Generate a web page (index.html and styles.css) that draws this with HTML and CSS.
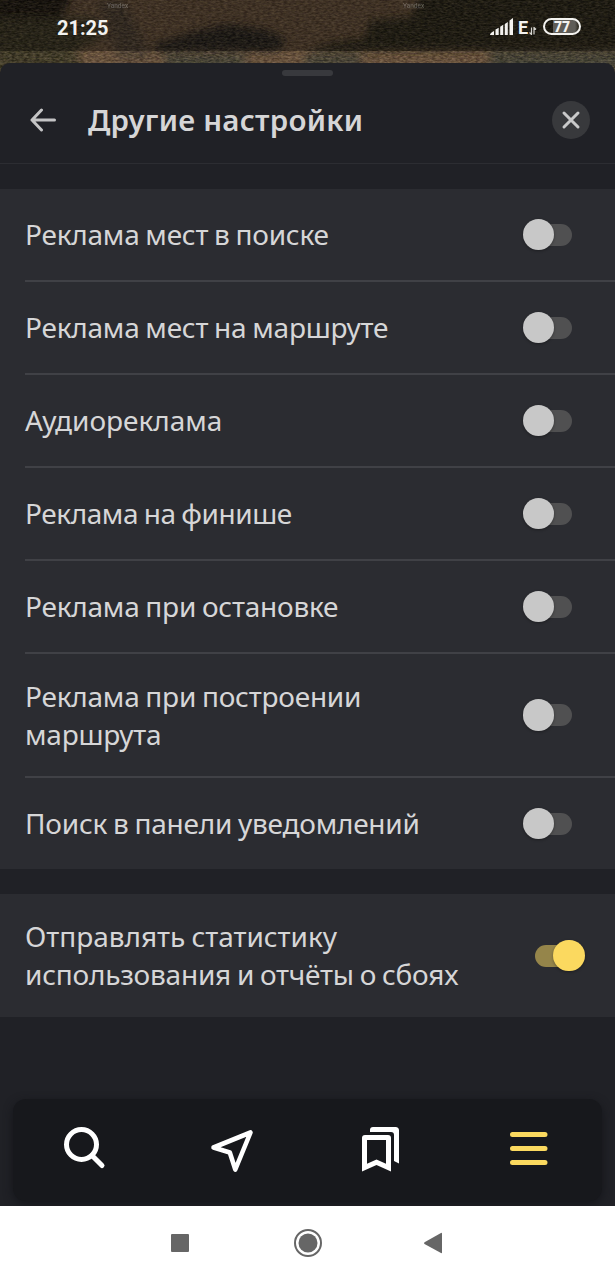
FILE: index.html
```html
<!DOCTYPE html>
<html lang="ru">
<head>
<meta charset="utf-8">
<title>Другие настройки</title>
<link rel="stylesheet" href="styles.css">
</head>
<body>
<div class="screen">
  <svg class="map" width="615" height="90" viewBox="0 0 615 90" aria-hidden="true">
    <defs>
      <filter id="soft" x="-20%" y="-50%" width="140%" height="200%"><feGaussianBlur stdDeviation="4"/></filter>
      <filter id="grain" x="0" y="0" width="100%" height="100%" color-interpolation-filters="sRGB">
        <feTurbulence type="fractalNoise" baseFrequency="0.25 0.6" numOctaves="3" seed="8"/>
        <feColorMatrix values="1 0 0 0 -0.22  0.9 0.1 0 0 -0.25  0.7 0 0.2 0 -0.24  0 0 0 0 0.34"/>
      </filter>
    </defs>
    <rect width="615" height="90" fill="#75593f"/>
    <g filter="url(#soft)">
      <path d="M-10-10H75L62 18H-10z" fill="#1b170f"/>
      <path d="M-10 18H95L105 36 75 51 90 85H-10z" fill="#3d3824"/>
      <path d="M98 0h25l30 60h-35z" fill="#544536"/>
      <path d="M152 45l45-14 30-7 40 6 20 10-10 12-70-1-50 2z" fill="#25241a"/>
      <path d="M420-10H630V50H470L305 52 330 43 365 38 370 20 412 17z" fill="#292519"/>
      <path d="M165 55h80v15h-80zM305 55h55v12h-55zM490 52h130v20H490z" fill="#434335"/>
    </g>
    <rect width="615" height="90" filter="url(#grain)"/>
    <rect width="615" height="51" fill="#000" opacity=".38"/>
    <text class="mark" x="107" y="8">Yandex</text>
    <text class="mark" x="403" y="8">Yandex</text>
  </svg>
  <header class="status">
    <span class="clock">21:25</span>
    <div class="indicators">
      <svg width="23" height="17" viewBox="0 0 23 17"><path d="M0 17q0-2 4-4v4zM5.500 11.500l3.200-1.700V17H5.500zM10.200 8.800l3-2V17h-3zM14.800 6l3-2v13h-3zM19.500 2.500L23 0v17h-3.500z"/></svg>
      <span class="net">E</span>
      <svg class="arrows" width="8" height="8" viewBox="0 0 8 8"><path d="M2.500.5v7L.5 5.500M5 7.500v-7l2 2"/></svg>
      <span class="battery"><b>77</b></span>
    </div>
  </header>
  <main class="sheet">
    <div class="grip"></div>
    <div class="head">
      <svg class="back" width="28" height="24" viewBox="0 0 28 24"><path d="M12.500 2L3 12l9.500 10M3 12h22.500"/></svg>
      <h1 class="title">Другие настройки</h1>
      <button class="close" aria-label="Закрыть"><svg width="20" height="20" viewBox="0 0 20 20"><path d="M3 3l14 14M17 3L3 17"/></svg></button>
    </div>
    <section class="group">
      <div class="row"><span class="label">Реклама мест в поиске</span><i class="toggle"></i></div>
      <div class="row"><span class="label">Реклама мест на маршруте</span><i class="toggle"></i></div>
      <div class="row"><span class="label loose">Аудиореклама</span><i class="toggle"></i></div>
      <div class="row"><span class="label tight">Реклама на финише</span><i class="toggle"></i></div>
      <div class="row"><span class="label">Реклама при остановке</span><i class="toggle"></i></div>
      <div class="row tall"><span class="label">Реклама при построении<br>маршрута</span><i class="toggle"></i></div>
      <div class="row last"><span class="label">Поиск в панели уведомлений</span><i class="toggle"></i></div>
    </section>
    <section class="group">
      <div class="row tall last"><span class="label"><span class="loose">Отправлять статистику</span><br>использования и отчёты о сбоях</span><i class="toggle on"></i></div>
    </section>
    <nav class="tabs">
      <svg width="50" height="50" viewBox="59 1124 50 50"><circle cx="81.500" cy="1144.500" r="15"/><path d="M92 1155.500l10 10"/></svg>
      <svg width="50" height="50" viewBox="207 1124 50 50"><path class="arrow" d="M213.500 1147.500L250.500 1132.500 235.300 1169.500 229.800 1152.500z"/></svg>
      <svg width="50" height="50" viewBox="355 1124 50 50"><path class="fill" fill-rule="evenodd" d="M365 1135h23q3 0 3 3v33.500l-14.500-6.500-14.500 6.500V1138q0-3 3-3zM367 1140v23.800l9.500-4.300 9.500 4.300V1140z"/><path class="fill" d="M370 1132v-2q0-3 3-3h22.500q3.500 0 3.500 3.500v33l-5-2.500v-26q0-3-3-3z"/></svg>
      <svg class="active" width="50" height="50" viewBox="503 1124 50 50"><path d="M512.500 1134.500h32.500M512.500 1148.500h32.500M512.500 1162.500h32.500"/></svg>
    </nav>
  </main>
  <footer class="system">
    <svg width="615" height="74" viewBox="0 1206 615 74"><rect x="171" y="1234" width="18" height="18" rx="1"/><circle cx="308" cy="1243" r="9.500"/><circle class="ring" cx="308" cy="1243" r="13"/><path d="M424.500 1242.200l16.500-9.200q1-.5 1 .5v19q0 1-1 .5L424.500 1244q-1-.9 0-1.800z"/></svg>
  </footer>
</div>
</body>
</html>
```
FILE: styles.css
```css
* { box-sizing: border-box; }
body { margin: 0; font-family: "Noto Sans", "Open Sans", sans-serif; }
.screen { position: relative; width: 615px; height: 1280px; overflow: hidden; display: flex; flex-direction: column; background: #202126; }
.map { position: absolute; top: 0; left: 0; }
.mark { font: 6.5px Roboto, sans-serif; fill: #fff; opacity: .28; }
.status { position: relative; height: 63px; flex: none; display: flex; justify-content: space-between; padding: 16px 34px 0 57px; color: #f3f2ef; }
.clock { font: 700 20px/24px Roboto, sans-serif; }
.indicators { display: flex; height: 19px; margin-top: 2px; align-items: flex-start; }
.indicators svg { fill: #f3f2ef; }
.net { margin: 0 0 0 5px; width: 11px; font: 700 18px/19px Roboto, sans-serif; }
.indicators .arrows { margin: 9px 6px 0 0; fill: none; stroke: #d5d4d0; stroke-width: 1.2; }
.battery { width: 38px; height: 17px; border: 2px solid #f3f2ef; border-radius: 9px; text-align: center; font: 700 14px/14px Roboto, sans-serif; background: linear-gradient(90deg, transparent 8px, #5e5c57 8px 30px, transparent 34px); }
.sheet { position: relative; flex: 1; display: flex; flex-direction: column; background: #202126; border-radius: 10px 10px 0 0; }
.grip { width: 51px; height: 6px; margin: 7px 0 0 282px; border-radius: 3px; background: #38393d; flex: none; }
.head { height: 88px; flex: none; display: flex; align-items: center; padding: 0 25px 0 29px; border-bottom: 1px solid #2c2d32; }
.back { fill: none; stroke: #c4c4c5; stroke-width: 3; stroke-linecap: round; stroke-linejoin: round; }
.title { flex: 1; margin: 0 0 0 31px; font-size: 29.5px; letter-spacing: .25px; line-height: 40px; font-weight: 600; color: #d6d6d7; white-space: nowrap; }
.close { width: 38px; height: 38px; padding: 0; border: 0; border-radius: 50%; background: #38393c; display: grid; place-items: center; }
.close svg { fill: none; stroke: #c9c9ca; stroke-width: 3; stroke-linecap: round; }
.group { margin-top: 25px; flex: none; background: #2b2c31; }
.row { height: 93px; margin-left: 25px; padding-right: 43px; display: flex; align-items: center; justify-content: space-between; border-bottom: 2px solid #404146; }
.row.tall { height: 124px; }
.row.last { height: 91px; border: 0; }
.row.tall.last { height: 123px; }
.label { padding-bottom: 1.5px; font-size: 28px; line-height: 38px; letter-spacing: -.22px; word-spacing: -1.2px; color: #d6d6d7; white-space: nowrap; }
.tall .label { padding-bottom: 0; }
.tall.last .label { padding-bottom: 1.5px; }
.tight { letter-spacing: -.42px; }
.loose { letter-spacing: -.02px; }
.toggle { position: relative; width: 37px; height: 22px; border-radius: 11px; background: #505051; }
.toggle::after { content: ""; position: absolute; left: -12.5px; top: -5px; width: 31.5px; height: 31.5px; border-radius: 50%; background: #c8c8c8; box-shadow: 0 1px 3px #0005; }
.toggle.on { background: #95854a; }
.toggle.on::after { left: 18px; background: #fbd95f; }
.tabs { position: absolute; left: 13px; top: 1036px; width: 589px; height: 102px; border-radius: 13px; background: #17181c; box-shadow: 0 3px 10px #14151a; display: flex; justify-content: space-between; align-items: center; padding: 0 49px 3px 46px; }
.tabs svg { fill: none; stroke: #fff; stroke-width: 5; stroke-linecap: round; stroke-linejoin: round; }
.tabs .arrow { stroke-width: 4.6; }
.tabs .fill { fill: #fff; stroke: none; }
.tabs .active { stroke: #fbd95f; }
.system { position: relative; height: 74px; flex: none; background: #fff; }
.system svg { display: block; fill: #666; }
.system .ring { fill: none; stroke: #666; stroke-width: 2; }
```
